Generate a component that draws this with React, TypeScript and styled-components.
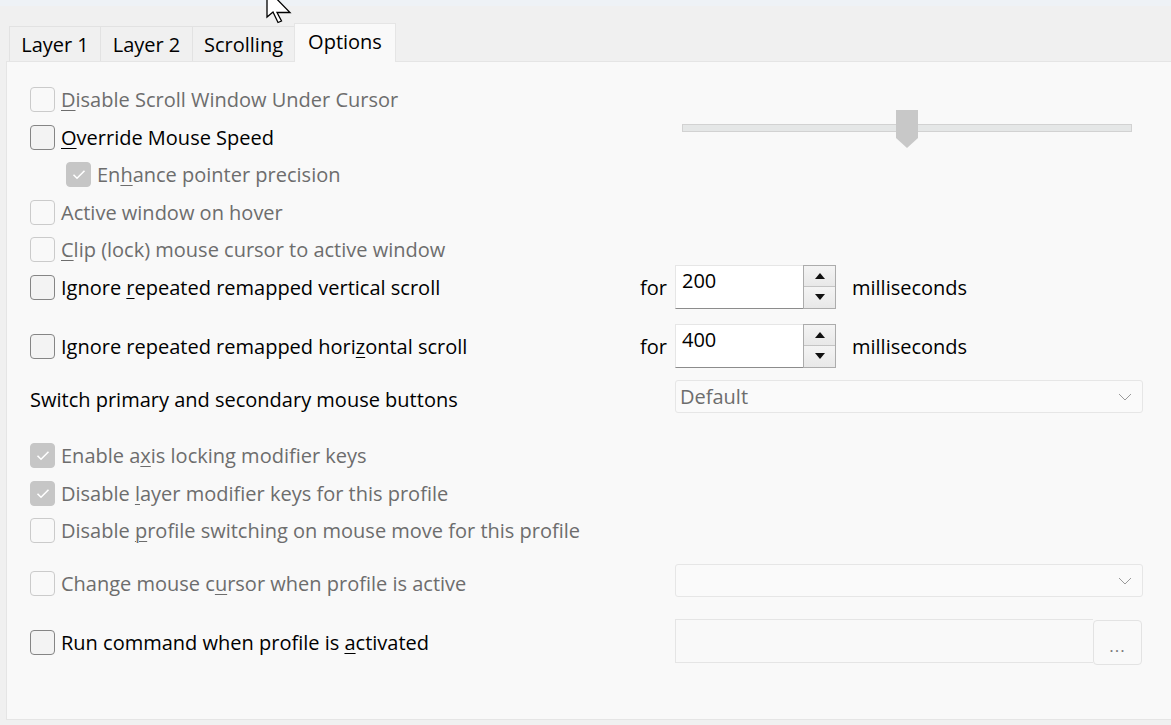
import React from "react";
import styled, { createGlobalStyle } from "styled-components";

const GlobalStyle = createGlobalStyle`
  html, body { margin: 0; padding: 0; }
  body {
    background: #f0f0f0;
    font-family: "Open Sans", "Noto Sans", "Liberation Sans", sans-serif;
    font-size: 20px;
    color: #000;
  }
`;

const Window = styled.div`
  position: relative;
  width: 1171px;
  height: 725px;
  overflow: hidden;
  background: #f0f0f0;
`;

const TopStrip = styled.div`
  height: 6px;
  background: #eef2f6;
`;

const TabBar = styled.div`
  display: flex;
  align-items: flex-end;
  height: 55px;
  padding-left: 10px;
`;

const Tab = styled.div<{ $active?: boolean; $w: number }>`
  box-sizing: border-box;
  width: ${(p) => p.$w}px;
  height: ${(p) => (p.$active ? 39 : 35)}px;
  display: flex;
  align-items: center;
  justify-content: center;
  padding-bottom: ${(p) => (p.$active ? 4 : 0)}px;
  background: ${(p) => (p.$active ? "#f9f9f9" : "#f0f0f0")};
  border: 1px solid ${(p) => (p.$active ? "#e5e5e5" : "#e2e2e2")};
  border-bottom: none;
  margin-left: -1px;
  position: relative;
  z-index: ${(p) => (p.$active ? 1 : 0)};
  margin-bottom: ${(p) => (p.$active ? -1 : 0)}px;
`;

const Panel = styled.div`
  box-sizing: border-box;
  margin-left: 6px;
  height: 659px;
  background: #f9f9f9;
  border: 1px solid #e5e5e5;
  border-right: none;
  padding: 18px 0 0 23px;
  display: flex;
  flex-direction: column;
`;

const Row = styled.div<{ $h: number; $mt?: number }>`
  display: grid;
  grid-template-columns: 610px 35px 468px;
  grid-template-rows: ${(p) => p.$h}px;
  height: ${(p) => p.$h}px;
  margin-top: ${(p) => p.$mt ?? 0}px;
  align-items: center;
`;

const LeftRow = styled.div<{ $h: number }>`
  display: flex;
  align-items: center;
  height: ${(p) => p.$h}px;
`;

const TopGroup = styled.div`
  display: grid;
  grid-template-columns: 645px 468px;
`;

const SliderCell = styled.div`
  padding-top: 44px;
`;

const SliderTrack = styled.div`
  position: relative;
  box-sizing: border-box;
  margin-left: 7px;
  width: 450px;
  height: 8px;
  background: #e5e7e7;
  border: 1px solid #d2d2d2;
`;

const SliderThumb = styled.div`
  position: absolute;
  left: 213px;
  top: -15px;
  width: 22px;
  height: 38px;
  background: #c8c8c8;
  clip-path: polygon(0 0, 100% 0, 100% 28px, 50% 100%, 0 28px);
`;

const CheckLabel = styled.label<{ $indent?: boolean; $disabled?: boolean }>`
  display: flex;
  align-items: center;
  gap: 6px;
  margin-left: ${(p) => (p.$indent ? 36 : 0)}px;
  color: ${(p) => (p.$disabled ? "#6d6d6d" : "#000")};
  white-space: nowrap;
`;

const Box = styled.span<{ $checked?: boolean; $disabled?: boolean }>`
  box-sizing: border-box;
  width: 25px;
  height: 25px;
  border-radius: 4px;
  flex: none;
  display: flex;
  align-items: center;
  justify-content: center;
  background: ${(p) => (p.$checked ? "#c6c6c6" : p.$disabled ? "#f9f9f9" : "#f3f3f3")};
  border: 1px solid
    ${(p) => (p.$checked ? "#c6c6c6" : p.$disabled ? "#cbcbcb" : "#858585")};
`;

const Key = styled.span`
  text-decoration: underline;
  text-underline-offset: 3px;
  text-decoration-thickness: 1px;
`;

const PlainText = styled.span`
  white-space: nowrap;
`;

const SpinWrap = styled.div`
  display: flex;
  align-items: center;
  gap: 16px;
`;

const SpinBox = styled.div`
  display: flex;
  width: 161px;
  height: 44px;
  margin-top: -1px;
  box-sizing: border-box;
`;

const SpinInput = styled.div`
  box-sizing: border-box;
  width: 128px;
  height: 44px;
  background: #fff;
  border-top: 1px solid #e6e6e6;
  border-left: 1px solid #e6e6e6;
  border-bottom: 1px solid #8c8c8c;
  padding: 0 0 0 6px;
  line-height: 30px;
`;

const SpinButtons = styled.div`
  box-sizing: border-box;
  width: 33px;
  height: 44px;
  border: 1px solid #acacac;
  display: flex;
  flex-direction: column;
  background: #f0f0f0;
`;

const SpinButton = styled.div<{ $down?: boolean }>`
  flex: 1;
  display: flex;
  align-items: center;
  justify-content: center;
  border-top: ${(p) => (p.$down ? "1px solid #c4c4c4" : "none")};
  background: linear-gradient(#f4f4f4, #e8e8e8);
`;

const Select = styled.div`
  box-sizing: border-box;
  align-self: start;
  width: 468px;
  height: 33px;
  border: 1px solid #e6e6e6;
  border-radius: 3px;
  background: #fafafa;
  display: flex;
  align-items: center;
  justify-content: space-between;
  padding: 0 10px 0 4px;
  color: #6d6d6d;
`;

const CommandWrap = styled.div`
  display: flex;
  align-items: flex-start;
`;

const CommandInput = styled.div`
  box-sizing: border-box;
  width: 418px;
  height: 44px;
  border: 1px solid #e5e5e5;
  border-right: none;
  background: #f9f9f9;
`;

const BrowseButton = styled.div`
  box-sizing: border-box;
  width: 49px;
  height: 45px;
  margin-top: 1px;
  border: 1px solid #e3e3e3;
  border-radius: 4px;
  background: #f9f9f9;
  color: #7a7a7a;
  display: flex;
  align-items: center;
  justify-content: center;
  padding-top: 6px;
  font-size: 17px;
  letter-spacing: 1px;
`;

const Cursor = styled.svg`
  position: absolute;
  left: 260px;
  top: 0;
  overflow: visible;
`;

const Check = ({
  checked,
  disabled,
  indent,
  children,
}: {
  checked?: boolean;
  disabled?: boolean;
  indent?: boolean;
  children: React.ReactNode;
}) => (
  <CheckLabel $indent={indent} $disabled={disabled}>
    <Box $checked={checked} $disabled={disabled}>
      {checked && (
        <svg width="14" height="11" viewBox="0 0 14 11">
          <path d="M1.5 5.8 L5 9.2 L12.5 1.8" fill="none" stroke="#fff" strokeWidth="1.6" />
        </svg>
      )}
    </Box>
    <span>{children}</span>
  </CheckLabel>
);

const Chevron = () => (
  <svg width="14" height="8" viewBox="0 0 14 8">
    <path d="M1 1 L7 7 L13 1" fill="none" stroke="#9a9a9a" strokeWidth="1" />
  </svg>
);

const Arrow = ({ down }: { down?: boolean }) => (
  <svg width="10" height="6" viewBox="0 0 10 6">
    <path d={down ? "M0 0 H10 L5 6 Z" : "M0 6 H10 L5 0 Z"} fill="#111" />
  </svg>
);

const Spin = ({ value }: { value: string }) => (
  <SpinWrap>
    <SpinBox>
      <SpinInput>{value}</SpinInput>
      <SpinButtons>
        <SpinButton>
          <Arrow />
        </SpinButton>
        <SpinButton $down>
          <Arrow down />
        </SpinButton>
      </SpinButtons>
    </SpinBox>
    <PlainText>milliseconds</PlainText>
  </SpinWrap>
);

export default function App() {
  return (
    <Window>
      <GlobalStyle />
      <TopStrip />
      <TabBar>
        <Tab $w={92}>Layer 1</Tab>
        <Tab $w={93}>Layer 2</Tab>
        <Tab $w={103}>Scrolling</Tab>
        <Tab $w={102} $active>
          Options
        </Tab>
      </TabBar>
      <Panel>
        <TopGroup>
          <div>
            <LeftRow $h={38}>
              <Check disabled>
                <Key>D</Key>isable Scroll Window Under Cursor
              </Check>
            </LeftRow>
            <LeftRow $h={38}>
              <Check>
                <Key>O</Key>verride Mouse Speed
              </Check>
            </LeftRow>
          </div>
          <SliderCell>
            <SliderTrack>
              <SliderThumb />
            </SliderTrack>
          </SliderCell>
        </TopGroup>
        <Row $h={37}>
          <Check checked disabled indent>
            En<Key>h</Key>ance pointer precision
          </Check>
        </Row>
        <Row $h={38}>
          <Check disabled>Active window on hover</Check>
        </Row>
        <Row $h={37}>
          <Check disabled>
            <Key>C</Key>lip (lock) mouse cursor to active window
          </Check>
        </Row>
        <Row $h={38}>
          <Check>
            Ignore <Key>r</Key>epeated remapped vertical scroll
          </Check>
          <PlainText>for</PlainText>
          <Spin value="200" />
        </Row>
        <Row $h={38} $mt={21}>
          <Check>
            Ignore repeated remapped hori<Key>z</Key>ontal scroll
          </Check>
          <PlainText>for</PlainText>
          <Spin value="400" />
        </Row>
        <Row $h={38} $mt={15}>
          <PlainText>Switch primary and secondary mouse buttons</PlainText>
          <span />
          <Select>
            <span>Default</span>
            <Chevron />
          </Select>
        </Row>
        <Row $h={38} $mt={18}>
          <Check checked disabled>
            Enable a<Key>x</Key>is locking modifier keys
          </Check>
        </Row>
        <Row $h={38}>
          <Check checked disabled>
            Disable <Key>l</Key>ayer modifier keys for this profile
          </Check>
        </Row>
        <Row $h={37}>
          <Check disabled>
            Disable <Key>p</Key>rofile switching on mouse move for this profile
          </Check>
        </Row>
        <Row $h={38} $mt={15}>
          <Check disabled>
            Change mouse c<Key>u</Key>rsor when profile is active
          </Check>
          <span />
          <Select>
            <span />
            <Chevron />
          </Select>
        </Row>
        <Row $h={44} $mt={18}>
          <Check>
            Run command when profile is <Key>a</Key>ctivated
          </Check>
          <span />
          <CommandWrap>
            <CommandInput />
            <BrowseButton>...</BrowseButton>
          </CommandWrap>
        </Row>
      </Panel>
      <Cursor width="40" height="30" viewBox="0 0 40 30">
        <path
          d="M7 -11 L7 17 L13 12 L18 22.5 L21.5 21 L17 12.5 L30 12.5 Z"
          fill="#fff"
          stroke="#000"
          strokeWidth="1.3"
          strokeLinejoin="miter"
        />
      </Cursor>
    </Window>
  );
}
